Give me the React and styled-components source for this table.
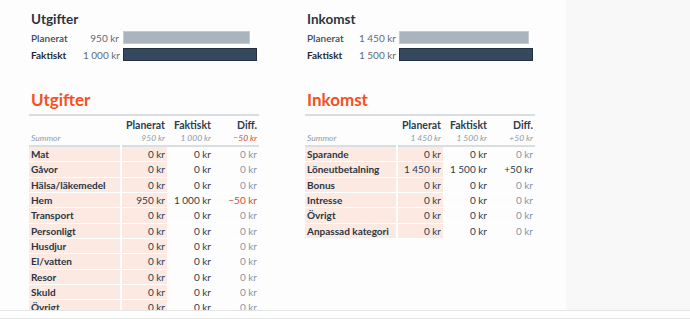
import styled, { createGlobalStyle } from "styled-components";

const GlobalStyle = createGlobalStyle`
  html, body {
    margin: 0;
    padding: 0;
    background: #ffffff;
  }
  body {
    font-family: Lato, "Open Sans", "Liberation Sans", sans-serif;
    color: #2c3e50;
  }
`;

const Page = styled.div`
  display: flex;
  flex-direction: column;
  width: 690px;
  height: 319px;
  overflow: hidden;
`;

const Body = styled.div`
  display: flex;
  height: 310px;
`;

const Main = styled.div`
  flex: 1;
  background: #fdfdfd;
  padding: 11px 0 0 29px;
  overflow: hidden;
`;

const SidePanel = styled.div`
  width: 124px;
  background: #f7f8f7;
`;

const Footer = styled.div`
  height: 7px;
  background: #ffffff;
  border-top: 1px solid #e4e6e6;
  border-bottom: 1px solid #e4e6e6;
`;

const Columns = styled.div`
  display: grid;
  grid-template-columns: 230px 230px;
  column-gap: 46px;
`;

const Summary = styled.div`
  padding-left: 2px;
`;

const SummaryTitle = styled.div`
  font-size: 13.5px;
  line-height: 16px;
  font-weight: 700;
  color: #2c3440;
`;

const SummaryRows = styled.div`
  display: flex;
  flex-direction: column;
  gap: 4px;
  margin-top: 4px;
`;

const SummaryRow = styled.div`
  display: grid;
  grid-template-columns: 52px 36px 138px;
  align-items: center;
  height: 13px;
  font-size: 10px;
`;

const SummaryLabel = styled.span`
  font-weight: ${(p) => (p.$strong ? 700 : 600)};
  color: ${(p) => (p.$strong ? "#1f2a36" : "#3d4a57")};
`;

const SummaryValue = styled.span`
  text-align: right;
  white-space: nowrap;
  color: #5f6b78;
`;

const BarTrack = styled.div`
  margin-left: 4px;
  height: 13px;
`;

const Bar = styled.div`
  height: 13px;
  box-sizing: border-box;
  background: ${(p) => (p.$dark ? "#34495e" : "#aab4bf")};
  border: 1px solid ${(p) => (p.$dark ? "#22313f" : "#c3cad2")};
`;

const Heading = styled.h2`
  margin: 29px 0 4px 2px;
  font-size: 17px;
  line-height: 20px;
  font-weight: 700;
  color: #f4511e;
`;

const Table = styled.table`
  width: 230px;
  border-collapse: collapse;
  table-layout: fixed;
  border-top: 2px solid #d9dee3;
  font-size: 10px;
`;

const HeadCell = styled.th`
  height: 15px;
  padding: 0 2px;
  text-align: right;
  font-size: 10.5px;
  font-weight: 700;
  color: #2c3e50;
  vertical-align: bottom;
`;

const SumRow = styled.tr`
  border-bottom: 2px solid #d9dee3;
`;

const SumCell = styled.td`
  height: 14px;
  padding: 0 2px;
  text-align: ${(p) => (p.$left ? "left" : "right")};
  font-size: 8.5px;
  font-style: italic;
  white-space: nowrap;
  color: ${(p) => (p.$neg ? "#d04a3a" : "#8e99a5")};
`;

const Row = styled.tr`
  border-bottom: 1px solid #ffffff;
`;

const LabelCell = styled.td`
  height: 14.33px;
  padding: 0 2px;
  background: #fbe9e2;
  border-right: 2px solid #ffffff;
  font-weight: 700;
  color: #2a3642;
  white-space: nowrap;
  overflow: hidden;
`;

const ValueCell = styled.td`
  height: 14.33px;
  padding: 0 2px;
  text-align: right;
  white-space: nowrap;
  background: ${(p) => (p.$pink ? "#fbe9e2" : "transparent")};
  color: ${(p) =>
    p.$neg ? "#d04a3a" : p.$muted ? "#8895a2" : "#2f3d4b"};
`;

const fmt = (n) => {
  const abs = Math.abs(n)
    .toString()
    .replace(/\B(?=(\d{3})+(?!\d))/g, "\u202f");
  return abs + " kr";
};

const diffText = (d) => {
  if (d === 0) return "0 kr";
  return (d > 0 ? "+" : "\u2212") + fmt(d);
};

const sections = [
  {
    title: "Utgifter",
    expense: true,
    rows: [
      ["Mat", 0, 0],
      ["Gåvor", 0, 0],
      ["Hälsa/läkemedel", 0, 0],
      ["Hem", 950, 1000],
      ["Transport", 0, 0],
      ["Personligt", 0, 0],
      ["Husdjur", 0, 0],
      ["El/vatten", 0, 0],
      ["Resor", 0, 0],
      ["Skuld", 0, 0],
      ["Övrigt", 0, 0],
    ],
  },
  {
    title: "Inkomst",
    expense: false,
    rows: [
      ["Sparande", 0, 0],
      ["Löneutbetalning", 1450, 1500],
      ["Bonus", 0, 0],
      ["Intresse", 0, 0],
      ["Övrigt", 0, 0],
      ["Anpassad kategori", 0, 0],
    ],
  },
];

const Section = ({ section }) => {
  const planned = section.rows.reduce((s, r) => s + r[1], 0);
  const actual = section.rows.reduce((s, r) => s + r[2], 0);
  const max = Math.max(planned, actual);
  // expenses: over budget is bad, income: more is good
  const diff = section.expense ? planned - actual : actual - planned;

  return (
    <div>
      <Summary>
        <SummaryTitle>{section.title}</SummaryTitle>
        <SummaryRows>
          <SummaryRow>
            <SummaryLabel>Planerat</SummaryLabel>
            <SummaryValue>{fmt(planned)}</SummaryValue>
            <BarTrack>
              <Bar style={{ width: `${(planned / max) * 100}%` }} />
            </BarTrack>
          </SummaryRow>
          <SummaryRow>
            <SummaryLabel $strong>Faktiskt</SummaryLabel>
            <SummaryValue>{fmt(actual)}</SummaryValue>
            <BarTrack>
              <Bar $dark style={{ width: `${(actual / max) * 100}%` }} />
            </BarTrack>
          </SummaryRow>
        </SummaryRows>
      </Summary>

      <Heading>{section.title}</Heading>
      <Table>
        <colgroup>
          <col style={{ width: 92 }} />
          <col style={{ width: 46 }} />
          <col style={{ width: 46 }} />
          <col style={{ width: 46 }} />
        </colgroup>
        <thead>
          <tr>
            <HeadCell />
            <HeadCell>Planerat</HeadCell>
            <HeadCell>Faktiskt</HeadCell>
            <HeadCell>Diff.</HeadCell>
          </tr>
          <SumRow>
            <SumCell $left>Summor</SumCell>
            <SumCell>{fmt(planned)}</SumCell>
            <SumCell>{fmt(actual)}</SumCell>
            <SumCell $neg={diff < 0}>{diffText(diff)}</SumCell>
          </SumRow>
        </thead>
        <tbody>
          {section.rows.map(([name, p, a]) => {
            const d = section.expense ? p - a : a - p;
            return (
              <Row key={name}>
                <LabelCell>{name}</LabelCell>
                <ValueCell $pink>{fmt(p)}</ValueCell>
                <ValueCell>{fmt(a)}</ValueCell>
                <ValueCell $muted={d === 0} $neg={d < 0}>
                  {diffText(d)}
                </ValueCell>
              </Row>
            );
          })}
        </tbody>
      </Table>
    </div>
  );
};

const App = () => {
  return (
    <>
      <GlobalStyle />
      <Page>
        <Body>
          <Main>
            <Columns>
              {sections.map((s) => (
                <Section key={s.title} section={s} />
              ))}
            </Columns>
          </Main>
          <SidePanel />
        </Body>
        <Footer />
      </Page>
    </>
  );
};

export default App;
